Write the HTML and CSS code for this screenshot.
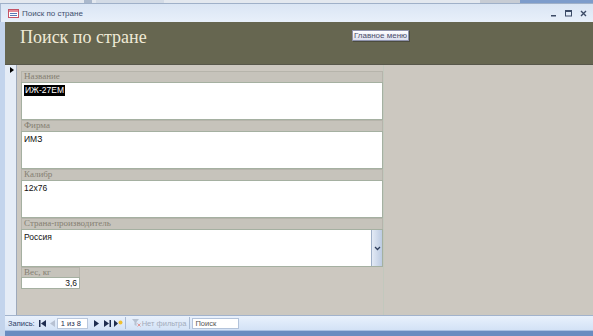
FILE: index.html
```html
<!DOCTYPE html>
<html lang="ru">
<head>
    <meta charset="UTF-8">
    <title>Поиск по стране</title>
    <link rel="stylesheet" href="styles.css">
</head>
<body>
    <div class="behind">
        <span class="behind-icon"></span>
        <span class="behind-tab"></span>
        <span class="behind-btns"></span>
        <span class="behind-blue"></span>
    </div>

    <div class="titlebar">
        <svg class="form-icon" width="11" height="9" viewBox="0 0 11 9">
            <rect x="0.5" y="0.5" width="10" height="8" fill="#fff" stroke="#c45466"/>
            <rect x="1" y="1" width="9" height="2" fill="#e48a96"/>
            <line x1="2" y1="4.5" x2="9" y2="4.5" stroke="#5a79b4"/>
            <line x1="2" y1="6.5" x2="9" y2="6.5" stroke="#5a79b4"/>
        </svg>
        <span class="title">Поиск по стране</span>
        <div class="controls">
            <svg width="7" height="7" viewBox="0 0 7 7"><rect x="1" y="5" width="5" height="1.5" fill="#3c4b66"/></svg>
            <svg width="7" height="7" viewBox="0 0 7 7"><rect x="0.5" y="0.5" width="6" height="5.5" fill="none" stroke="#3c4b66"/><rect x="0.5" y="0.5" width="6" height="1.5" fill="#3c4b66"/></svg>
            <svg width="7" height="7" viewBox="0 0 7 7"><path d="M1 1 L6 6 M6 1 L1 6" stroke="#3c4b66" stroke-width="1.4"/></svg>
        </div>
    </div>

    <div class="window">
        <div class="header">
            <h1>Поиск по стране</h1>
            <button class="menu-btn">Главное меню</button>
        </div>

        <div class="detail">
            <div class="selector"><span class="arrow"></span></div>
            <div class="fields">
                <div class="field">
                    <div class="label">Название</div>
                    <div class="box"><span class="selected">ИЖ-27ЕМ</span></div>
                </div>
                <div class="field">
                    <div class="label">Фирма</div>
                    <div class="box">ИМЗ</div>
                </div>
                <div class="field">
                    <div class="label">Калибр</div>
                    <div class="box">12x76</div>
                </div>
                <div class="field">
                    <div class="label">Страна-производитель</div>
                    <div class="box combo">
                        <span class="combo-text">Россия</span>
                        <span class="drop">
                            <svg width="7" height="5" viewBox="0 0 7 5"><path d="M1 1 L3.5 3.5 L6 1" fill="none" stroke="#2f3e5c" stroke-width="1.3"/></svg>
                        </span>
                    </div>
                </div>
                <div class="field small">
                    <div class="label">Вес, кг</div>
                    <div class="box num">3,6</div>
                </div>
            </div>
        </div>

        <div class="navbar">
            <span class="nav-label">Запись:</span>
            <svg class="nav-first" width="7" height="7" viewBox="0 0 7 7"><rect x="0" y="0" width="1.5" height="7" fill="#1e2d4f"/><path d="M7 0 L2 3.5 L7 7z" fill="#1e2d4f"/></svg>
            <svg class="nav-prev" width="5" height="7" viewBox="0 0 5 7"><path d="M5 0 L0 3.5 L5 7z" fill="#b7c1d2"/></svg>
            <span class="counter">1 из 8</span>
            <svg class="nav-next" width="5" height="7" viewBox="0 0 5 7"><path d="M0 0 L5 3.5 L0 7z" fill="#1e2d4f"/></svg>
            <svg class="nav-last" width="7" height="7" viewBox="0 0 7 7"><path d="M0 0 L5 3.5 L0 7z" fill="#1e2d4f"/><rect x="5.5" y="0" width="1.5" height="7" fill="#1e2d4f"/></svg>
            <svg class="nav-new" width="9" height="8" viewBox="0 0 9 8"><path d="M0 1 L4 4.5 L0 8z" fill="#1e2d4f"/><circle cx="6.5" cy="3.5" r="2" fill="#f0c030"/></svg>
            <span class="sep"></span>
            <svg class="filter-icon" width="9" height="8" viewBox="0 0 9 8"><path d="M0 0 H7 L4.5 3 V7 L2.5 6 V3z" fill="#b8c2d2"/><path d="M5.5 4.5 L8.5 7.5 M8.5 4.5 L5.5 7.5" stroke="#e09a9a"/></svg>
            <span class="nofilter">Нет фильтра</span>
            <span class="sep sep-2"></span>
            <span class="search">Поиск</span>
        </div>
        <div class="frame-bottom"></div>
    </div>
</body>
</html>
```

FILE: styles.css
```css
* {
    margin: 0;
    padding: 0;
    box-sizing: border-box;
}

body {
    width: 593px;
    height: 336px;
    overflow: hidden;
    background: #cdc9c1;
    font-family: "Liberation Sans", Arial, sans-serif;
}

/* window behind, only its bottom edge shows */
.behind {
    height: 4px;
    display: flex;
    overflow: hidden;
    background: #e3e8ef;
    border-bottom: 1px solid #9fb0c8;
}

.behind-icon {
    margin-left: 84px;
    width: 8px;
    background: #aab8cc;
}

.behind-tab {
    margin-left: 4px;
    width: 68px;
    background: #d3dbe6;
}

.behind-btns {
    margin-left: auto;
    width: 40px;
    background: #c7ccd4;
}

.behind-blue {
    width: 73px;
    background: #7d9ccb;
}

/* title bar */
.titlebar {
    height: 18px;
    display: flex;
    align-items: center;
    padding-left: 7px;
    background: linear-gradient(#dae5f4, #e8f0fa);
    border-left: 1px solid #a9bad2;
}

.title {
    margin-left: 3px;
    font-size: 8px;
    color: #3e4f6e;
}

.controls {
    margin-left: auto;
    display: flex;
    gap: 8px;
    padding-right: 6px;
}

/* form */
.window {
    border-left: 5px solid #c3d4ec;
}

.header {
    height: 43px;
    display: flex;
    align-items: flex-start;
    padding-left: 15px;
    background: #666650;
    border-bottom: 1px solid #57574a;
}

.header h1 {
    flex: 0 0 332px;
    padding-top: 3px;
    font-family: "Liberation Serif", "Times New Roman", serif;
    font-weight: normal;
    font-size: 18px;
    line-height: 24px;
    color: #efead6;
}

.menu-btn {
    margin-top: 8px;
    width: 57px;
    height: 11px;
    font-family: "Liberation Sans", Arial, sans-serif;
    font-size: 8px;
    line-height: 9px;
    color: #4a4d6a;
    background: linear-gradient(#ffffff, #dcdfef);
    border: 1px solid #8e92ab;
    box-shadow: 1px 1px 0 #4c4c3e;
}

.detail {
    height: 250px;
    display: flex;
    background: #ccc8c0;
}

.selector {
    width: 12px;
    background: #e5ecf6;
    border-right: 1px solid #9ea9ba;
}

.arrow {
    display: block;
    width: 0;
    height: 0;
    margin: 2px 0 0 5px;
    border-left: 4px solid #000;
    border-top: 3px solid transparent;
    border-bottom: 3px solid transparent;
}

.fields {
    width: 367px;
    padding: 6px 0 0 4px;
    border-right: 1px solid #c2c8bd;
}

.label {
    height: 11px;
    padding-left: 2px;
    background: #c6c3bb;
    border: 1px solid #b6b4ab;
    border-bottom: none;
    font-family: "Liberation Serif", "Times New Roman", serif;
    font-size: 9px;
    line-height: 9px;
    color: #857f72;
}

.box {
    height: 38px;
    padding: 2px 0 0 2px;
    background: #fff;
    border: 1px solid #a5b0a1;
    font-size: 8.5px;
    line-height: 11px;
    color: #111;
}

.selected {
    display: inline-block;
    padding: 0 1px;
    background: #000;
    color: #fff;
}

.combo {
    display: flex;
    padding: 0;
}

.combo-text {
    flex: 1;
    padding: 2px 0 0 2px;
}

.drop {
    width: 11px;
    display: flex;
    align-items: center;
    justify-content: center;
    background: linear-gradient(90deg, #e3eaf5, #bccbe2);
    border-left: 1px solid #9fb0c8;
}

.field.small {
    width: 59px;
}

.field.small .label {
    height: 10px;
}

.field.small .box {
    height: 12px;
    padding: 0 2px 0 0;
    text-align: right;
}

/* record navigation */
.navbar {
    height: 15px;
    display: flex;
    align-items: center;
    padding-left: 3px;
    background: linear-gradient(#e9f1fc, #d3e2f6);
    border-top: 1px solid #a2b3cc;
    font-size: 7.5px;
    color: #2c3e66;
}

.nav-first { margin-left: 4px; }
.nav-prev { margin-left: 4px; }

.counter {
    margin-left: 2px;
    width: 31px;
    height: 11px;
    padding-left: 3px;
    line-height: 9px;
    background: #fff;
    border: 1px solid #b9c7dc;
    color: #1e2d4f;
}

.nav-next { margin-left: 6px; }
.nav-last { margin-left: 5px; }
.nav-new { margin-left: 3px; }

.sep {
    width: 1px;
    height: 12px;
    margin-left: 2px;
    background: #a9bbd5;
}

.sep-2 { margin-left: 3px; }

.filter-icon { margin-left: 6px; }

.nofilter {
    margin-left: 1px;
    color: #a3acbb;
}

.search {
    margin-left: 2px;
    width: 47px;
    height: 11px;
    padding-left: 2px;
    line-height: 9px;
    background: #fff;
    border: 1px solid #b3c3da;
    color: #555;
}

.frame-bottom {
    height: 6px;
    background: #6a8cc0;
    border-top: 1px solid #a9c0e2;
}
```
